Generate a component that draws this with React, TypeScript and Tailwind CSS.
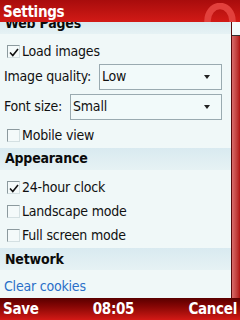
const font = { fontFamily: '"DejaVu Sans Condensed", "DejaVu Sans", sans-serif' }

function Check({ checked }: { checked: boolean }) {
  return (
    <div className="relative w-[13px] h-[13px] border border-t-[#8c9a9e] border-l-[#8c9a9e] border-r-[#d4e0e2] border-b-[#d4e0e2] bg-[#f4fafa]">
      {checked && (
        <svg className="absolute left-[1px] top-[2px]" width="10" height="9" viewBox="0 0 10 9">
          <path d="M1 4.5 L3.8 7.5 L9 1" fill="none" stroke="#111" strokeWidth="1.6" />
        </svg>
      )}
    </div>
  )
}

function CheckRow({ label, checked, className = '' }: { label: string; checked: boolean; className?: string }) {
  return (
    <div className={'flex items-center h-[24px] pl-[7px] gap-[2px] ' + className}>
      <Check checked={checked} />
      <span className="text-[14px] text-[#111] tracking-[-0.2px]">{label}</span>
    </div>
  )
}

function Select({ label, value, width }: { label: string; value: string; width: string }) {
  return (
    <div className="flex items-center justify-between h-[26px] pl-[4px] pr-[9px]">
      <span className="text-[14px] text-[#111] tracking-[-0.2px]">{label}</span>
      <div className={'flex items-center justify-between h-[26px] border border-[#9aaab0] bg-[#f2fafa] pl-[2px] pr-[11px] ' + width}>
        <span className="text-[14px] text-[#111] tracking-[-0.2px]">{value}</span>
        <svg width="6" height="4" viewBox="0 0 6 4">
          <path d="M0 0 H6 L3 4 Z" fill="#222" />
        </svg>
      </div>
    </div>
  )
}

function Band({ label, className = '' }: { label: string; className?: string }) {
  return (
    <div className={'flex items-center h-[22px] pl-[5px] bg-gradient-to-b from-[#d9eaf0] to-[#e6f2f4] ' + className}>
      <span className="text-[14px] font-bold text-[#0a0a0a] tracking-[-0.2px]">{label}</span>
    </div>
  )
}

export default function App() {
  return (
    <div className="w-[240px] h-[320px] overflow-hidden flex flex-col bg-[#f0f8f8]" style={font}>
      <div className="relative h-[22px] bg-gradient-to-b from-[#a80c0c] to-[#d21a16] overflow-hidden">
        <svg className="absolute left-[203px] top-[3px]" width="34" height="36" viewBox="0 0 34 36">
          <ellipse cx="17" cy="18" rx="12.5" ry="15" fill="none" stroke="#e2403c" strokeWidth="6.5" />
        </svg>
        <span className="relative pl-[3px] text-[15px] font-bold text-white leading-[22px] tracking-[-0.3px]">Settings</span>
      </div>
      <div className="flex h-[276px]">
        <div className="flex-1 flex flex-col">
          <div className="h-[12px] overflow-hidden bg-gradient-to-b from-[#d9eaf0] to-[#e6f2f4] pl-[5px]">
            <div className="-mt-[9px] text-[14px] font-bold text-[#0a0a0a] tracking-[-0.2px]">Web Pages</div>
          </div>
          <CheckRow label="Load images" checked className="mt-[6px] h-[22px]" />
          <Select label="Image quality:" value="Low" width="w-[123px]" />
          <div className="h-[4px]" />
          <Select label="Font size:" value="Small" width="w-[152px]" />
          <CheckRow label="Mobile view" checked={false} className="mt-[4px]" />
          <Band label="Appearance" />
          <CheckRow label="24-hour clock" checked className="mt-[6px]" />
          <CheckRow label="Landscape mode" checked={false} />
          <CheckRow label="Full screen mode" checked={false} />
          <Band label="Network" className="mt-[1px]" />
          <div className="flex items-center h-[24px] mt-[4px] pl-[4px]">
            <span className="text-[14px] text-[#2a6fc8] tracking-[-0.2px]">Clear cookies</span>
          </div>
        </div>
        <div className="w-[9px] flex flex-col border-l border-[#5a0a0a] bg-[#c81c1c]">
          <div className="h-[14px] bg-[#f4fafa] border-b border-[#333]" />
          <div className="flex-1 bg-gradient-to-r from-[#d86a6a] to-[#b01010]" />
        </div>
      </div>
      <div className="flex items-center justify-between h-[22px] px-[3px] bg-gradient-to-b from-[#5a0000] to-[#d41a16] text-[15px] font-bold text-white tracking-[-0.3px]">
        <span>Save</span>
        <span>08:05</span>
        <span>Cancel</span>
      </div>
    </div>
  )
}
